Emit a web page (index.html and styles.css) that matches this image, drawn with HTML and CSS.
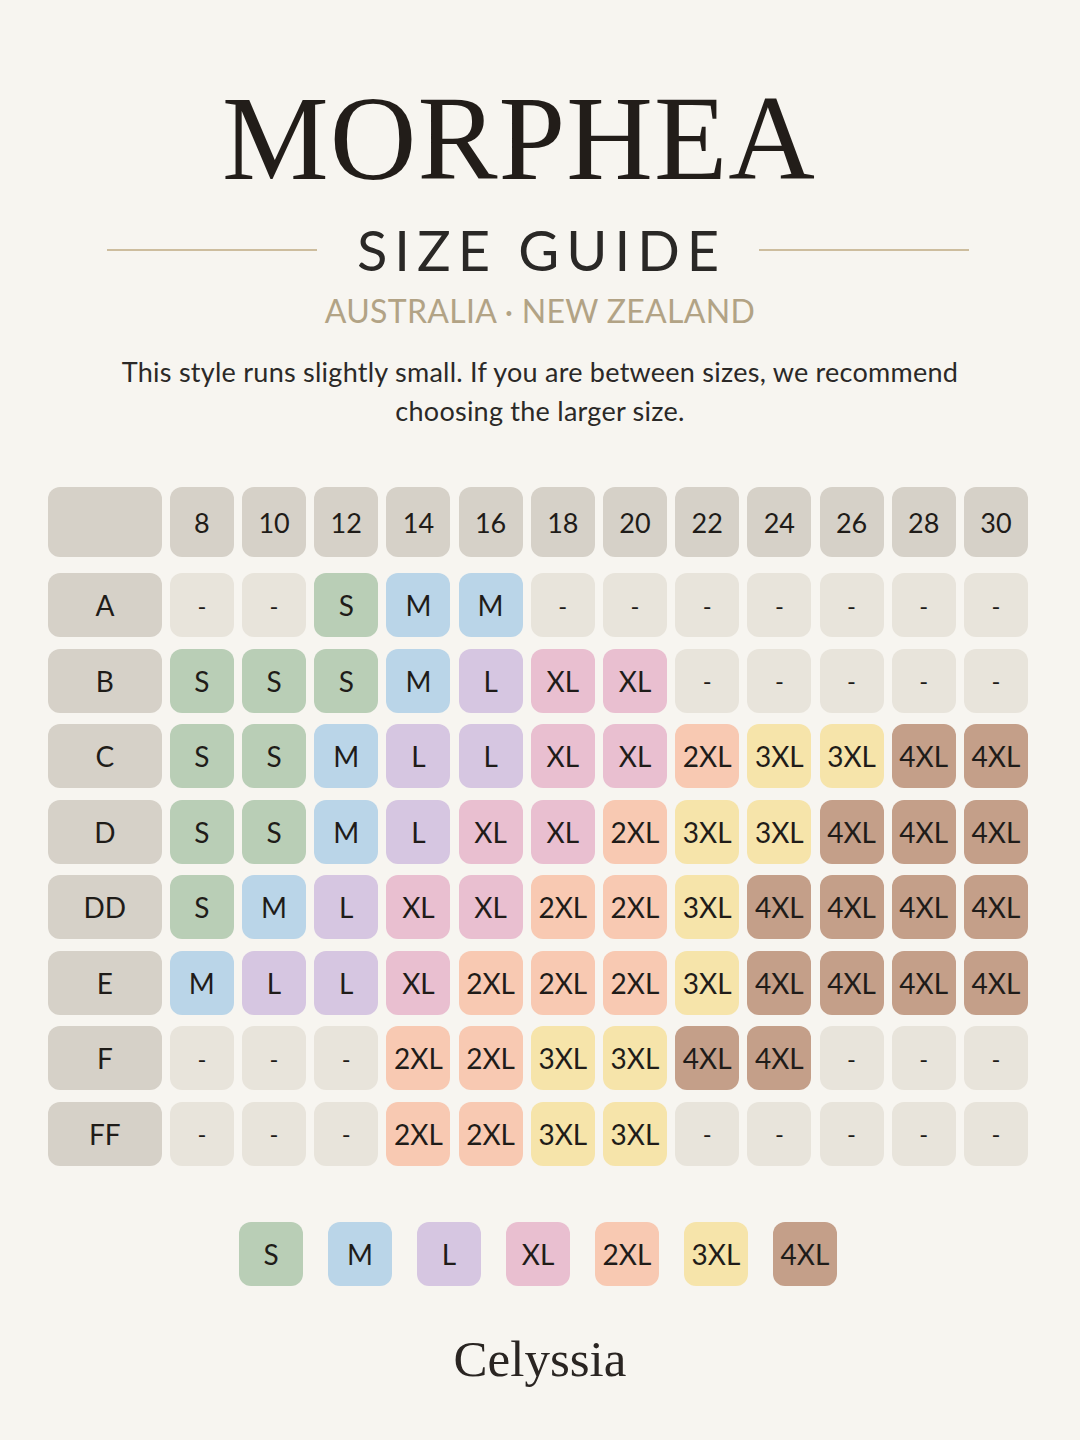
FILE: index.html
```html
<!DOCTYPE html>
<html lang="en">
<head>
<meta charset="utf-8">
<title>Morphea Size Guide</title>
<link rel="stylesheet" href="styles.css">
</head>
<body>
<main class="page">
  <h1 class="brand">MORPHEA</h1>
  <div class="title-row">
    <span class="rule"></span>
    <h2 class="title">SIZE GUIDE</h2>
    <span class="rule"></span>
  </div>
  <p class="region">AUSTRALIA · NEW ZEALAND</p>
  <p class="note">This style runs slightly small. If you are between sizes, we recommend<br>choosing the larger size.</p>

  <div class="grid head">
    <div class="cell label"></div>
    <div class="cell hd">8</div><div class="cell hd">10</div><div class="cell hd">12</div><div class="cell hd">14</div><div class="cell hd">16</div><div class="cell hd">18</div><div class="cell hd">20</div><div class="cell hd">22</div><div class="cell hd">24</div><div class="cell hd">26</div><div class="cell hd">28</div><div class="cell hd">30</div>
  </div>

  <div class="grid body">
    <div class="cell label">A</div>
    <div class="cell e">-</div><div class="cell e">-</div><div class="cell s">S</div><div class="cell m">M</div><div class="cell m">M</div><div class="cell e">-</div><div class="cell e">-</div><div class="cell e">-</div><div class="cell e">-</div><div class="cell e">-</div><div class="cell e">-</div><div class="cell e">-</div>

    <div class="cell label">B</div>
    <div class="cell s">S</div><div class="cell s">S</div><div class="cell s">S</div><div class="cell m">M</div><div class="cell l">L</div><div class="cell xl">XL</div><div class="cell xl">XL</div><div class="cell e">-</div><div class="cell e">-</div><div class="cell e">-</div><div class="cell e">-</div><div class="cell e">-</div>

    <div class="cell label">C</div>
    <div class="cell s">S</div><div class="cell s">S</div><div class="cell m">M</div><div class="cell l">L</div><div class="cell l">L</div><div class="cell xl">XL</div><div class="cell xl">XL</div><div class="cell x2">2XL</div><div class="cell x3">3XL</div><div class="cell x3">3XL</div><div class="cell x4">4XL</div><div class="cell x4">4XL</div>

    <div class="cell label">D</div>
    <div class="cell s">S</div><div class="cell s">S</div><div class="cell m">M</div><div class="cell l">L</div><div class="cell xl">XL</div><div class="cell xl">XL</div><div class="cell x2">2XL</div><div class="cell x3">3XL</div><div class="cell x3">3XL</div><div class="cell x4">4XL</div><div class="cell x4">4XL</div><div class="cell x4">4XL</div>

    <div class="cell label">DD</div>
    <div class="cell s">S</div><div class="cell m">M</div><div class="cell l">L</div><div class="cell xl">XL</div><div class="cell xl">XL</div><div class="cell x2">2XL</div><div class="cell x2">2XL</div><div class="cell x3">3XL</div><div class="cell x4">4XL</div><div class="cell x4">4XL</div><div class="cell x4">4XL</div><div class="cell x4">4XL</div>

    <div class="cell label">E</div>
    <div class="cell m">M</div><div class="cell l">L</div><div class="cell l">L</div><div class="cell xl">XL</div><div class="cell x2">2XL</div><div class="cell x2">2XL</div><div class="cell x2">2XL</div><div class="cell x3">3XL</div><div class="cell x4">4XL</div><div class="cell x4">4XL</div><div class="cell x4">4XL</div><div class="cell x4">4XL</div>

    <div class="cell label">F</div>
    <div class="cell e">-</div><div class="cell e">-</div><div class="cell e">-</div><div class="cell x2">2XL</div><div class="cell x2">2XL</div><div class="cell x3">3XL</div><div class="cell x3">3XL</div><div class="cell x4">4XL</div><div class="cell x4">4XL</div><div class="cell e">-</div><div class="cell e">-</div><div class="cell e">-</div>

    <div class="cell label">FF</div>
    <div class="cell e">-</div><div class="cell e">-</div><div class="cell e">-</div><div class="cell x2">2XL</div><div class="cell x2">2XL</div><div class="cell x3">3XL</div><div class="cell x3">3XL</div><div class="cell e">-</div><div class="cell e">-</div><div class="cell e">-</div><div class="cell e">-</div><div class="cell e">-</div>
  </div>

  <div class="legend">
    <div class="cell s">S</div>
    <div class="cell m">M</div>
    <div class="cell l">L</div>
    <div class="cell xl">XL</div>
    <div class="cell x2">2XL</div>
    <div class="cell x3">3XL</div>
    <div class="cell x4">4XL</div>
  </div>

  <p class="maker">Celyssia</p>
</main>
</body>
</html>
```

FILE: styles.css
```css
html, body {
  margin: 0;
  padding: 0;
  background: #f7f5f0;
}

.page {
  width: 1080px;
  height: 1440px;
  box-sizing: border-box;
  padding-top: 79px;
  display: flex;
  flex-direction: column;
  align-items: center;
  font-family: Lato, "Noto Sans", sans-serif;
  color: #1f1c19;
}

.brand {
  margin: 0 42px 0 0;
  font-family: "Liberation Serif", serif;
  font-weight: 400;
  font-size: 120px;
  line-height: 120px;
  color: #221d19;
  letter-spacing: 1px;
}

.title-row {
  margin-top: 23px;
  display: flex;
  align-items: center;
  gap: 40px;
  height: 56px;
  margin-right: 4px;
}

.rule {
  display: block;
  width: 210px;
  height: 2px;
  background: #cdbd9e;
}

.title {
  margin: 0 -7px 0 0;
  font-weight: 400;
  font-size: 56px;
  line-height: 56px;
  letter-spacing: 7px;
  color: #2a2826;
}

.region {
  margin: 16px 0 0;
  font-size: 32px;
  line-height: 34px;
  letter-spacing: 0.3px;
  color: #b2a385;
}

.note {
  margin: 24px 0 0;
  font-size: 27px;
  line-height: 39px;
  letter-spacing: 0.25px;
  text-align: center;
  color: #2b2927;
}

.grid {
  display: grid;
  grid-template-columns: 113.6px repeat(12, 64px);
  column-gap: 8.2px;
  margin-left: -4px;
}

.head {
  margin-top: 57px;
  grid-template-rows: 70px;
}

.body {
  margin-top: 16px;
  grid-template-rows: repeat(8, 64px);
  row-gap: 11.5px;
}

.cell {
  display: flex;
  align-items: center;
  justify-content: center;
  border-radius: 12px;
  font-size: 28px;
  color: #1f1c19;
  background: #e8e4db;
}

.label, .hd {
  background: #d6d1c8;
}

.hd {
  font-size: 27px;
}

.e { background: #e8e4db; font-size: 24px; }
.s { background: #b9ceb6; }
.m { background: #bad5e8; }
.l { background: #d6c6e1; }
.xl { background: #e9bfd0; }
.x2 { background: #f8c9b2; }
.x3 { background: #f6e4aa; }
.x4 { background: #c49f89; }

.legend {
  margin-top: 56px;
  display: flex;
  gap: 25px;
  margin-left: -4px;
}

.legend .cell {
  width: 64px;
  height: 64px;
}

.maker {
  margin: 48px 0 0;
  font-family: "Liberation Serif", serif;
  font-size: 51px;
  line-height: 51px;
  color: #2a2522;
}
```
